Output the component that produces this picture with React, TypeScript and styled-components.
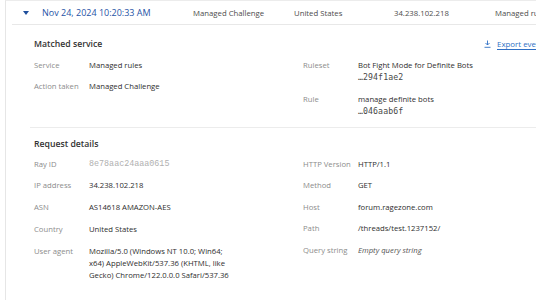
import React from "react";
import styled, { createGlobalStyle } from "styled-components";

const Global = createGlobalStyle`
  html, body { margin: 0; padding: 0; background: #fff; overflow: hidden; }
  body { font-family: "Open Sans", "Noto Sans", sans-serif; color: #333; }
`;

const Page = styled.div`
  width: 620px;
  height: 300px;
  padding-left: 5px;
  box-sizing: border-box;
`;

const Panel = styled.div`
  border-left: 1px solid #e6e6e6;
  border-top: 1px solid #ececec;
  height: 100%;
`;

const HeaderRow = styled.div`
  display: flex;
  align-items: center;
  height: 23px;
  margin-left: 6px;
  border-bottom: 1px solid #e8e8e8;
  padding-left: 11px;
`;

const Caret = styled.span`
  width: 0;
  height: 0;
  border-left: 3.5px solid transparent;
  border-right: 3.5px solid transparent;
  border-top: 4px solid #1f4f9c;
  margin-right: 13px;
  margin-top: 1px;
`;

const DateText = styled.span`
  width: 151px;
  font-size: 9px;
  color: #1f54a6;
  white-space: nowrap;
`;

const HeadCell = styled.span<{ $w: number }>`
  width: ${(p) => p.$w}px;
  font-size: 7.75px;
  color: #4d4d4d;
  white-space: nowrap;
`;

const Section = styled.div<{ $last?: boolean }>`
  margin-left: 24px;
  padding: ${(p) => (p.$last ? "9px 0 0 4px" : "12px 0 9px 4px")};
  border-bottom: ${(p) => (p.$last ? "none" : "1px solid #ececec")};
`;

const SectionHead = styled.div<{ $mb: number }>`
  display: flex;
  align-items: center;
  height: 14px;
  margin-bottom: ${(p) => p.$mb}px;
`;

const Title = styled.div`
  font-size: 8.7px;
  font-weight: 600;
  color: #333;
  width: 450px;
`;

const ExportLink = styled.a`
  display: flex;
  align-items: center;
  gap: 6px;
  font-size: 7.9px;
  color: #2f6fc4;
  text-decoration: underline;
  text-underline-offset: 1.5px;
  white-space: nowrap;
  svg { display: block; }
`;

const Columns = styled.div`
  display: grid;
  grid-template-columns: 269px 1fr;
`;

const Column = styled.div<{ $gap: number }>`
  display: flex;
  flex-direction: column;
  gap: ${(p) => p.$gap}px;
`;

const Row = styled.div`
  display: grid;
  grid-template-columns: 55px 1fr;
  font-size: 7.7px;
  line-height: 12px;
`;

const Label = styled.div`
  color: #8c8c8c;
  white-space: nowrap;
`;

const Value = styled.div<{ $italic?: boolean }>`
  color: ${(p) => (p.$italic ? "#555" : "#2e2e2e")};
  font-style: ${(p) => (p.$italic ? "italic" : "normal")};
`;

const Mono = styled.div`
  font-family: "DejaVu Sans Mono", "Liberation Mono", monospace;
  font-size: 8.2px;
  line-height: 13px;
  color: #484848;
  letter-spacing: 0.1px;
`;

const LightMono = styled.div`
  font-family: "Liberation Mono", monospace;
  font-size: 8.4px;
  line-height: 12px;
  color: #b0b0b0;
`;

const DownloadIcon = () => (
  <svg width="7" height="8" viewBox="0 0 7 8" fill="none" stroke="#2f6fc4" strokeWidth="0.9">
    <path d="M3.5 0.5 V5" />
    <path d="M1.5 3 L3.5 5 L5.5 3" />
    <path d="M0.5 7.3 H6.5" />
  </svg>
);

type Item = { label: string; value: React.ReactNode };

const RowItem = ({ label, value }: Item) => (
  <Row>
    <Label>{label}</Label>
    <div>{value}</div>
  </Row>
);

export default function App() {
  return (
    <>
      <Global />
      <Page>
        <Panel>
          <HeaderRow>
            <Caret />
            <DateText>Nov 24, 2024 10:20:33 AM</DateText>
            <HeadCell $w={101}>Managed Challenge</HeadCell>
            <HeadCell $w={100}>United States</HeadCell>
            <HeadCell $w={101}>34.238.102.218</HeadCell>
            <HeadCell $w={80}>Managed rules</HeadCell>
          </HeaderRow>

          <Section>
            <SectionHead $mb={7.5}>
              <Title>Matched service</Title>
              <ExportLink>
                <DownloadIcon />
                Export event JSON
              </ExportLink>
            </SectionHead>
            <Columns>
              <Column $gap={9.5}>
                <RowItem label="Service" value={<Value>Managed rules</Value>} />
                <RowItem label="Action taken" value={<Value>Managed Challenge</Value>} />
              </Column>
              <Column $gap={9.5}>
                <RowItem
                  label="Ruleset"
                  value={
                    <>
                      <Value>Bot Fight Mode for Definite Bots</Value>
                      <Mono>…294f1ae2</Mono>
                    </>
                  }
                />
                <RowItem
                  label="Rule"
                  value={
                    <>
                      <Value>manage definite bots</Value>
                      <Mono>…046aab6f</Mono>
                    </>
                  }
                />
              </Column>
            </Columns>
          </Section>

          <Section $last>
            <SectionHead $mb={6.5}>
              <Title>Request details</Title>
            </SectionHead>
            <Columns>
              <Column $gap={9.8}>
                <RowItem label="Ray ID" value={<LightMono>8e78aac24aaa0615</LightMono>} />
                <RowItem label="IP address" value={<Value>34.238.102.218</Value>} />
                <RowItem label="ASN" value={<Value>AS14618 AMAZON-AES</Value>} />
                <RowItem label="Country" value={<Value>United States</Value>} />
                <RowItem
                  label="User agent"
                  value={
                    <Value>
                      Mozilla/5.0 (Windows NT 10.0; Win64;
                      <br />
                      x64) AppleWebKit/537.36 (KHTML, like
                      <br />
                      Gecko) Chrome/122.0.0.0 Safari/537.36
                    </Value>
                  }
                />
              </Column>
              <Column $gap={9.5}>
                <RowItem label="HTTP Version" value={<Value>HTTP/1.1</Value>} />
                <RowItem label="Method" value={<Value>GET</Value>} />
                <RowItem label="Host" value={<Value>forum.ragezone.com</Value>} />
                <RowItem label="Path" value={<Value>/threads/test.1237152/</Value>} />
                <RowItem label="Query string" value={<Value $italic>Empty query string</Value>} />
              </Column>
            </Columns>
          </Section>
        </Panel>
      </Page>
    </>
  );
}
